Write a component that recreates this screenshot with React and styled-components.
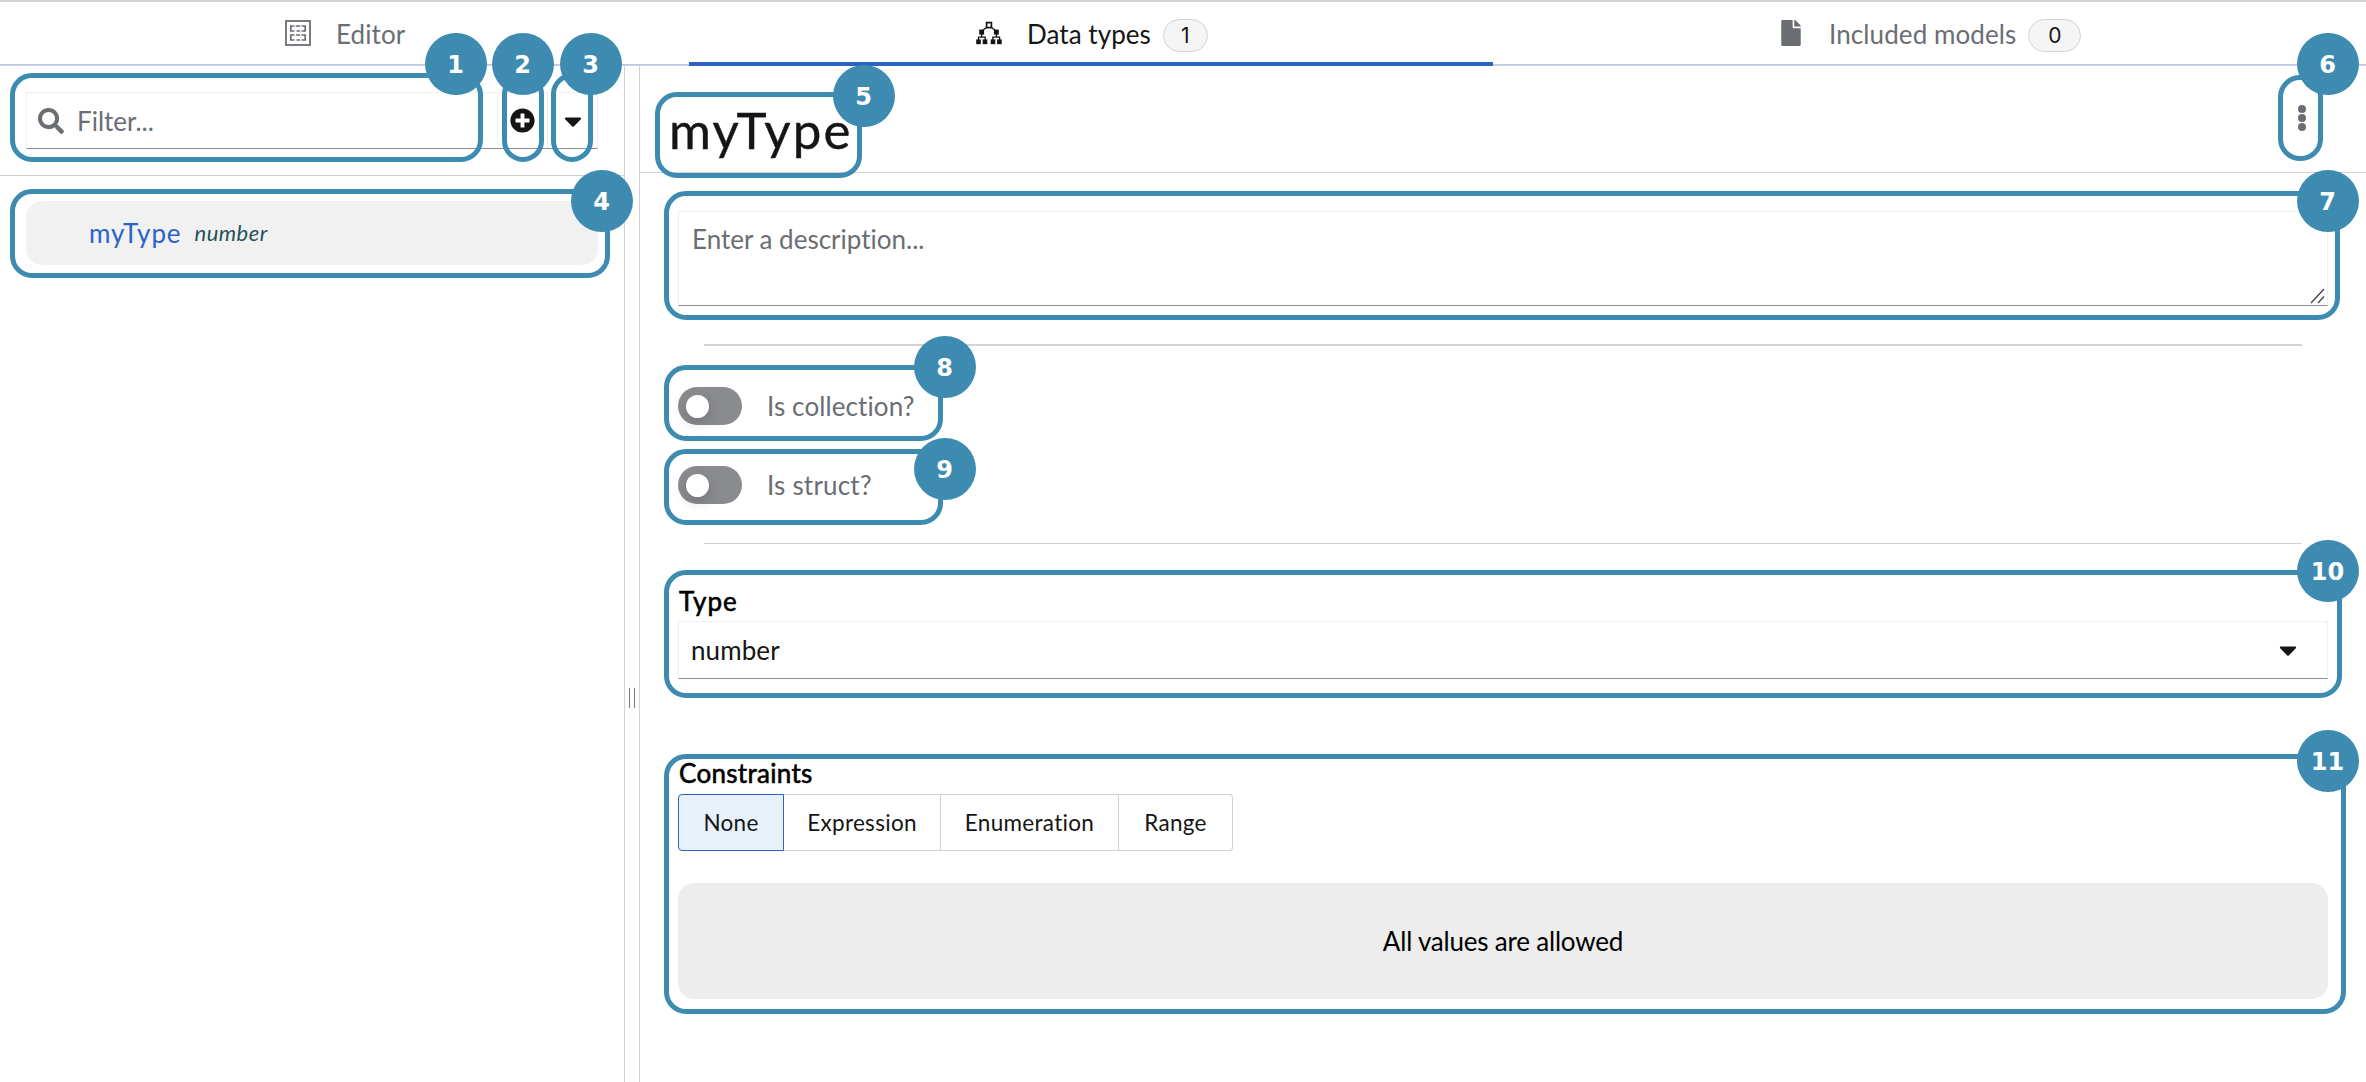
import React from 'react';
import styled, { createGlobalStyle, css } from 'styled-components';
import { FaCaretDown, FaFile, FaPlusCircle, FaSearch } from 'react-icons/fa';

const GlobalStyle = createGlobalStyle`
  *, *::before, *::after { box-sizing: border-box; }
  body {
    margin: 0;
    background: #fff;
    color: #151515;
    font-family: Lato, "Open Sans", sans-serif;
    font-size: 26px;
    line-height: 32px;
    font-variant-ligatures: none;
    overflow: hidden;
  }
`;

const Page = styled.div`
  position: relative;
  display: flex;
  flex-direction: column;
  width: 2366px;
  height: 1082px;
  overflow: hidden;
`;

/* ---------- tabs ---------- */

const TabBar = styled.nav`
  display: grid;
  grid-template-columns: 689px 804px 1fr;
  height: 66px;
  border-top: 2px solid #d2d2d2;
  flex: none;
`;

const Tab = styled.div`
  display: flex;
  align-items: center;
  padding-left: ${(p) => p.$lead}px;
  color: ${(p) => (p.$active ? '#151515' : '#6a6e73')};
  box-shadow: ${(p) =>
    p.$active ? 'inset 0 -4px 0 #2b62c4' : 'inset 0 -1px 0 #d0d2d6, inset 0 -2px 0 #b7c9ed'};
`;

const TabIcon = styled.span`
  display: flex;
  justify-content: center;
  width: 26px;
  margin-right: 25px;
  margin-bottom: 2px;
`;

const Label = styled.span`
  white-space: nowrap;
  letter-spacing: ${(p) => p.$track || 0}px;
`;

const Badge = styled.span`
  display: flex;
  align-items: center;
  justify-content: center;
  width: ${(p) => p.$width}px;
  height: 33px;
  margin-left: 12px;
  margin-top: 3px;
  border: 1px solid #d2d2d2;
  border-radius: 17px;
  background: #f5f5f5;
  color: #151515;
  font-family: Inter, sans-serif;
  font-size: 21px;
  line-height: 30px;
`;

/* ---------- body ---------- */

const Body = styled.div`
  display: flex;
  flex: 1;
  min-height: 0;
`;

const Sidebar = styled.aside`
  width: 625px;
  border-right: 1px solid #d2d2d2;
  flex: none;
`;

const Toolbar = styled.div`
  height: 110px;
  padding: 26px 26px 0;
  border-bottom: 1px solid #d2d2d2;
`;

const FilterGroup = styled.div`
  display: grid;
  grid-template-columns: 1fr 50px 50px;
  height: 57px;
  border: 1px solid #f0f0f0;
  border-bottom-color: #8a8d90;
`;

const FilterField = styled.div`
  display: flex;
  align-items: center;
  padding-left: 11px;
  gap: 13px;
  color: #6a6e73;
`;

const FilterButton = styled.div`
  display: flex;
  align-items: center;
  justify-content: center;
  border-left: 1px solid #f0f0f0;
  color: #151515;
`;

const TypeList = styled.div`
  padding: 25px 26px 0;
`;

const TypeItem = styled.div`
  display: flex;
  align-items: center;
  height: 64px;
  padding-left: 63px;
  border-radius: 16px;
  background: #f1f1f1;
`;

const TypeName = styled.span`
  color: #2b62c9;
  letter-spacing: 0.9px;
`;

const TypeKind = styled.em`
  margin-left: 13px;
  color: #27505a;
  font-size: 22px;
  letter-spacing: 0.5px;
`;

const Splitter = styled.div`
  display: flex;
  align-items: flex-start;
  gap: 4px;
  width: 15px;
  padding: 622px 0 0 4px;
  border-right: 1px solid #d2d2d2;
  flex: none;
`;

const Grip = styled.span`
  width: 1px;
  height: 20px;
  background: #77797c;
`;

const Main = styled.main`
  flex: 1;
  min-width: 0;
`;

const Header = styled.header`
  display: flex;
  justify-content: space-between;
  align-items: flex-start;
  height: 107px;
  padding: 34px 60px 0 29px;
  border-bottom: 1px solid #d2d2d2;
`;

const Title = styled.h1`
  margin: 0;
  font-size: 51px;
  line-height: 60px;
  font-weight: 400;
  letter-spacing: 2.1px;
  -webkit-text-stroke: 0.4px #151515;
`;

const Kebab = styled.div`
  display: flex;
  flex-direction: column;
  gap: 1px;
  margin-top: 5px;
`;

const Dot = styled.span`
  width: 8px;
  height: 8px;
  border-radius: 50%;
  background: #6a6e73;
`;

const Form = styled.div`
  padding: 38px 38px 0;
`;

const field = css`
  border: 1px solid #f0f0f0;
  border-bottom-color: #8a8d90;
`;

const Description = styled.div`
  ${field}
  display: flex;
  justify-content: space-between;
  height: 95px;
  padding: 11px 1px 1px 13px;
  color: #6a6e73;
`;

const Resizer = styled.svg`
  align-self: flex-end;
`;

const Rule = styled.hr`
  height: ${(p) => p.$size}px;
  margin: ${(p) => p.$before}px 26px ${(p) => p.$after}px;
  border: 0;
  background: #d2d2d2;
`;

const SwitchRow = styled.div`
  display: flex;
  align-items: center;
  gap: 25px;
  height: 38px;
  color: #6a6e73;
  & + & { margin-top: 41px; }
`;

const Track = styled.span`
  display: flex;
  align-items: center;
  width: 64px;
  height: 38px;
  padding-left: 8px;
  border-radius: 19px;
  background: #8a8b8f;
`;

const Knob = styled.span`
  width: 23px;
  height: 23px;
  border-radius: 50%;
  background: #fff;
  box-shadow: 0 5px 14px rgba(0, 0, 0, 0.16);
`;

const FieldLabel = styled.div`
  height: 32px;
  margin-bottom: ${(p) => p.$gap}px;
  padding-left: 1px;
  color: #000;
  line-height: 33px;
  -webkit-text-stroke: 0.6px #000;
  letter-spacing: ${(p) => p.$track}px;
`;

const Select = styled.div`
  ${field}
  display: flex;
  align-items: center;
  justify-content: space-between;
  height: 58px;
  margin-bottom: 78px;
  padding: 0 25px 0 12px;
`;

const ToggleGroup = styled.div`
  display: flex;
  height: 57px;
  margin-bottom: 32px;
`;

const ToggleItem = styled.div`
  display: flex;
  align-items: center;
  justify-content: center;
  width: ${(p) => p.$width}px;
  border: 1px solid ${(p) => (p.$selected ? '#2b62c4' : '#d2d2d2')};
  border-left-width: ${(p) => (p.$selected ? 1 : 0)}px;
  background: ${(p) => (p.$selected ? '#e8f0f9' : '#fff')};
  font-size: 22.5px;
  letter-spacing: 0.3px;
  &:first-child { border-radius: 4px 0 0 4px; }
  &:last-child { border-radius: 0 4px 4px 0; }
`;

const Notice = styled.div`
  display: flex;
  align-items: center;
  justify-content: center;
  height: 116px;
  border-radius: 16px;
  background: #ededed;
  color: #000;
  letter-spacing: -0.2px;
`;

/* ---------- numbered callouts laid over the page ---------- */

const Outline = styled.div`
  position: absolute;
  left: ${(p) => p.$x}px;
  top: ${(p) => p.$y}px;
  width: ${(p) => p.$w}px;
  height: ${(p) => p.$h}px;
  border: 5px solid #3d8bb1;
  border-radius: 22px;
`;

const Marker = styled.div`
  position: absolute;
  left: ${(p) => p.$cx - 31}px;
  top: ${(p) => p.$cy - 31}px;
  width: 62px;
  height: 62px;
  padding-right: 1px;
  border-radius: 50%;
  background: #3d8bb1;
  color: #fff;
  font: bold 24px/64px "DejaVu Sans", sans-serif;
  text-align: center;
`;

const callouts = [
  { box: [10, 73, 473, 89], at: [456, 64] },
  { box: [502, 73, 42, 89], at: [523, 64] },
  { box: [551, 73, 42, 89], at: [591, 64] },
  { box: [10, 189, 600, 89], at: [602, 201] },
  { box: [655, 92, 207, 86], at: [864, 96] },
  { box: [2278, 75, 45, 86], at: [2328, 64] },
  { box: [664, 191, 1676, 129], at: [2328, 201] },
  { box: [664, 365, 279, 76], at: [945, 367] },
  { box: [664, 449, 279, 76], at: [945, 469] },
  { box: [664, 570, 1678, 128], at: [2328, 571] },
  { box: [664, 754, 1682, 260], at: [2328, 761] },
];

const EditorIcon = () => (
  <svg width="26" height="26" viewBox="0 0 26 26" fill="none" stroke="currentColor">
    <rect x="1" y="1" width="24" height="24" strokeWidth="1.8" />
    <g strokeWidth="1.7">
      <path d="M9.5 6H5.8v5h3.7M16.5 6h3.7v5h-3.7M10.8 6h4.4M11.5 11h3.6" />
      <path d="M9.5 15H5.8v5h3.7M16.5 15h3.7v5h-3.7M10.8 15h4.4M11.5 20h3.6" />
    </g>
  </svg>
);

const TreeIcon = () => (
  <svg width="26" height="24" viewBox="0 0 26 24" fill="currentColor">
    <rect x="10.6" y="1.6" width="4.8" height="5" fill="none" stroke="currentColor" strokeWidth="1.7" />
    <path
      d="M10.5 6.5L6.5 9.5M15.5 6.5L19.5 9.5M5.6 13v3M20.4 13v3M2.5 19v-2.8h6.7V19M16.9 19v-2.8h6.7V19"
      fill="none"
      stroke="currentColor"
      strokeWidth="1.3"
    />
    <rect x="3.2" y="8.6" width="4.9" height="5" />
    <rect x="17.9" y="8.6" width="4.9" height="5" />
    <rect x="0.2" y="18.4" width="4.6" height="4.8" />
    <rect x="6.7" y="18.4" width="4.6" height="4.8" />
    <rect x="14.7" y="18.4" width="4.6" height="4.8" />
    <rect x="21.1" y="18.4" width="4.6" height="4.8" />
  </svg>
);

export default function App() {
  return (
    <Page>
      <GlobalStyle />
      <TabBar>
        <Tab $lead={285}>
          <TabIcon><EditorIcon /></TabIcon>
          <Label $track={0.1}>Editor</Label>
        </Tab>
        <Tab $lead={287} $active>
          <TabIcon><TreeIcon /></TabIcon>
          <Label $track={0.05}>Data types</Label>
          <Badge $width={45}>1</Badge>
        </Tab>
        <Tab $lead={285}>
          <TabIcon><FaFile size={26} /></TabIcon>
          <Label $track={0.1}>Included models</Label>
          <Badge $width={53}>0</Badge>
        </Tab>
      </TabBar>
      <Body>
        <Sidebar>
          <Toolbar>
            <FilterGroup>
              <FilterField>
                <FaSearch size={26} />
                <Label>Filter...</Label>
              </FilterField>
              <FilterButton><FaPlusCircle size={25} /></FilterButton>
              <FilterButton><FaCaretDown size={28} /></FilterButton>
            </FilterGroup>
          </Toolbar>
          <TypeList>
            <TypeItem>
              <TypeName>myType</TypeName>
              <TypeKind>number</TypeKind>
            </TypeItem>
          </TypeList>
        </Sidebar>
        <Splitter><Grip /><Grip /></Splitter>
        <Main>
          <Header>
            <Title>myType</Title>
            <Kebab><Dot /><Dot /><Dot /></Kebab>
          </Header>
          <Form>
            <Description>
              <Label>Enter a description...</Label>
              <Resizer width="16" height="16" viewBox="0 0 16 16" stroke="#444" strokeWidth="1.3">
                <path d="M1 15L14 1M8 15L14 8.5" />
              </Resizer>
            </Description>
            <Rule $size={2} $before={38} $after={41} />
            <SwitchRow>
              <Track><Knob /></Track>
              <Label $track={0.1}>Is collection?</Label>
            </SwitchRow>
            <SwitchRow>
              <Track><Knob /></Track>
              <Label $track={0.2}>Is struct?</Label>
            </SwitchRow>
            <Rule $size={1} $before={39} $after={41} />
            <FieldLabel $gap={4} $track={1}>Type</FieldLabel>
            <Select>
              <Label $track={0.1}>number</Label>
              <FaCaretDown size={28} />
            </Select>
            <FieldLabel $gap={5} $track={0.3}>Constraints</FieldLabel>
            <ToggleGroup>
              <ToggleItem $width={106} $selected>None</ToggleItem>
              <ToggleItem $width={157}>Expression</ToggleItem>
              <ToggleItem $width={178}>Enumeration</ToggleItem>
              <ToggleItem $width={114}>Range</ToggleItem>
            </ToggleGroup>
            <Notice>All values are allowed</Notice>
          </Form>
        </Main>
      </Body>
      {callouts.map(({ box: [x, y, w, h] }, i) => (
        <Outline key={i} $x={x} $y={y} $w={w} $h={h} />
      ))}
      {callouts.map(({ at: [cx, cy] }, i) => (
        <Marker key={i} $cx={cx} $cy={cy}>{i + 1}</Marker>
      ))}
    </Page>
  );
}
